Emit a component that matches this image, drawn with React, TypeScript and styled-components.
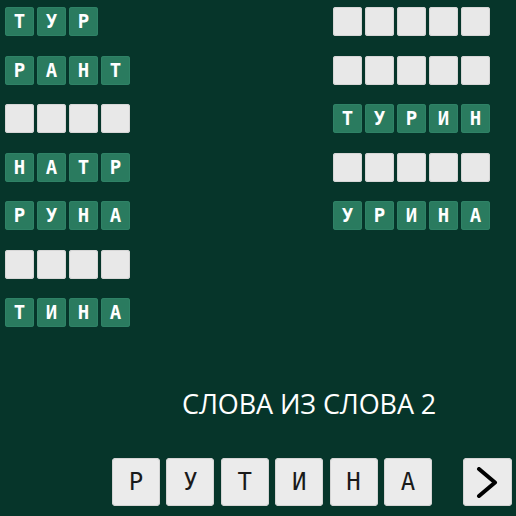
import React from "react";
import styled, { createGlobalStyle } from "styled-components";

const Global = createGlobalStyle`
  html, body { margin: 0; padding: 0; background: #06352a; }
  body { width: 516px; height: 516px; overflow: hidden; }
`;

const Page = styled.div`
  width: 516px;
  height: 516px;
  background: #06352a;
  display: flex;
  flex-direction: column;
  box-sizing: border-box;
`;

const Board = styled.div`
  display: flex;
  justify-content: space-between;
  padding: 7px 26px 0 5px;
`;

const Column = styled.div`
  display: flex;
  flex-direction: column;
  gap: 19.5px;
`;

const Row = styled.div`
  display: flex;
  gap: 3px;
`;

const Tile = styled.div<{ $open: boolean }>`
  width: 29px;
  height: 29px;
  box-sizing: border-box;
  border-radius: 3px;
  background: ${(p) => (p.$open ? "#2a7b5f" : "#e8e8e8")};
  box-shadow: ${(p) =>
    p.$open ? "inset 0 0 0 1px #2f8266" : "inset 0 0 0 1px #d6d6d6"};
  display: flex;
  align-items: center;
  justify-content: center;
  color: #ffffff;
  font-family: "DejaVu Sans Mono", monospace;
  font-weight: bold;
  font-size: 19px;
  line-height: 1;
`;

const Footer = styled.div`
  margin-top: auto;
  display: flex;
  flex-direction: column;
  padding-bottom: 10px;
`;

const Title = styled.div`
  color: #ffffff;
  font-family: "Open Sans", sans-serif;
  font-size: 27px;
  line-height: 30px;
  letter-spacing: -0.1px;
  margin-left: 182px;
  margin-bottom: 39px;
  white-space: nowrap;
`;

const Keys = styled.div`
  display: flex;
  align-items: center;
  padding-left: 112px;
`;

const Letters = styled.div`
  display: flex;
  gap: 6.4px;
`;

const Key = styled.div`
  width: 48px;
  height: 48px;
  box-sizing: border-box;
  border-radius: 4px;
  background: #ebebeb;
  box-shadow: inset 0 0 0 1px #d4d4d4;
  display: flex;
  align-items: center;
  justify-content: center;
  color: #1a1a1a;
  font-family: "DejaVu Sans Mono", monospace;
  font-size: 24px;
  line-height: 1;
`;

const NextButton = styled(Key)`
  width: 49px;
  margin-left: 31px;
`;

const leftWords: (string | null)[] = [
  "ТУР",
  "РАНТ",
  null,
  "НАТР",
  "РУНА",
  null,
  "ТИНА",
];
const leftLens = [3, 4, 4, 4, 4, 4, 4];

const rightWords: (string | null)[] = [null, null, "ТУРИН", null, "УРИНА"];
const rightLens = [5, 5, 5, 5, 5];

function Word({ word, len }: { word: string | null; len: number }) {
  return (
    <Row>
      {Array.from({ length: len }).map((_, i) => (
        <Tile key={i} $open={!!word}>
          {word ? word[i] : ""}
        </Tile>
      ))}
    </Row>
  );
}

export default function App() {
  return (
    <Page>
      <Global />
      <Board>
        <Column>
          {leftWords.map((w, i) => (
            <Word key={i} word={w} len={leftLens[i]} />
          ))}
        </Column>
        <Column>
          {rightWords.map((w, i) => (
            <Word key={i} word={w} len={rightLens[i]} />
          ))}
        </Column>
      </Board>
      <Footer>
        <Title>СЛОВА ИЗ СЛОВА 2</Title>
        <Keys>
          <Letters>
            {"РУТИНА".split("").map((c, i) => (
              <Key key={i}>{c}</Key>
            ))}
          </Letters>
          <NextButton>
            <svg width="22" height="31" viewBox="0 0 22 31">
              <polyline
                points="3,2 19,15.5 3,29"
                fill="none"
                stroke="#000"
                strokeWidth="4"
                strokeLinecap="round"
                strokeLinejoin="round"
              />
            </svg>
          </NextButton>
        </Keys>
      </Footer>
    </Page>
  );
}
